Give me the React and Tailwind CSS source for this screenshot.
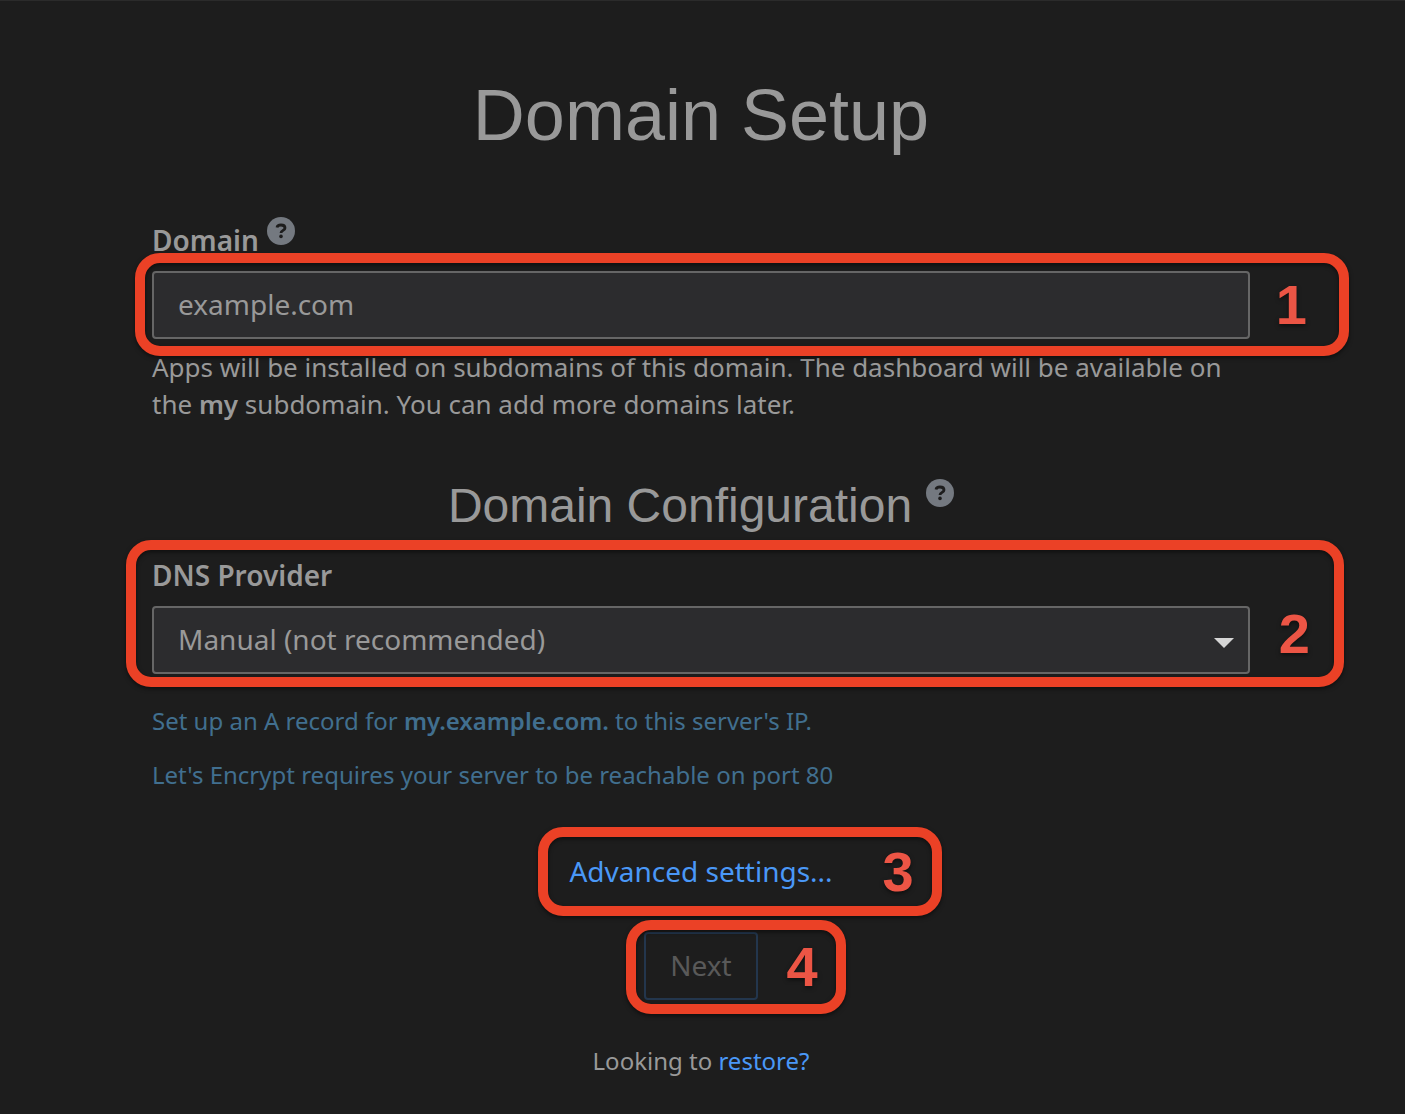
import React from "react";

function HelpIcon({ label }) {
  return (
    <svg viewBox="0 0 28 28" role="img" aria-label={label} className="size-7 shrink-0">
      <circle cx="14" cy="14" r="14" fill="#747980" />
      <path
        d="M10 10.6C10.3 8.8 11.8 8 14 8C16.6 8 18 9.1 18 11C18 13.5 14 13.2 14 16"
        fill="none"
        stroke="#1d1d1d"
        strokeWidth="2.8"
      />
      <circle cx="14" cy="19.4" r="1.8" fill="#1d1d1d" />
    </svg>
  );
}

function Callout({ number, className }) {
  return (
    <div
      className={
        "pointer-events-none absolute flex items-center justify-end rounded-[25px] border-[10px] border-[#eb4126] font-['Liberation_Sans',sans-serif] text-[56px] leading-none font-bold text-[#ec5545] drop-shadow-[0_2px_2px_rgba(0,0,0,0.5)] " +
        className
      }
    >
      <span>{number}</span>
    </div>
  );
}

const field =
  "block h-[68px] w-full appearance-none rounded border-2 border-[#666666] bg-[#2c2c2e] px-6 pb-0.5 text-[28px] text-[#999999] placeholder:text-[#999999] outline-none";

export default function App() {
  return (
    <div className="min-h-screen overflow-x-hidden border-t border-[#2b2b2b] bg-[#1d1d1d] pt-[74px] pr-[35px] pb-8 pl-8 font-['Noto_Sans',sans-serif] text-[#999999]">
      <main className="mx-auto w-full max-w-[1098px]">
        <h1 className="text-center font-['Liberation_Sans',sans-serif] text-[72px] leading-[80px]">
          Domain Setup
        </h1>

        <form className="mt-[66px]" onSubmit={(e) => e.preventDefault()}>
          <div className="flex gap-2 text-[28px] leading-[38px] font-semibold">
            <label htmlFor="domain">Domain</label>
            <span className="-mt-1">
              <HelpIcon label="Domain help" />
            </span>
          </div>
          <div className="relative mt-3">
            <input id="domain" type="text" placeholder="example.com" className={field} />
            <Callout number="1" className="-top-[18px] -right-[99px] -bottom-[17px] -left-[17px] pr-8" />
          </div>
          <p className="mt-[10px] text-[26px] leading-[37px]">
            Apps will be installed on subdomains of this domain. The dashboard will be available on
            the <b className="font-semibold">my</b> subdomain. You can add more domains later.
          </p>

          <h2 className="mt-14 flex justify-center gap-[14px] font-['Liberation_Sans',sans-serif] text-[48px] leading-[54px]">
            Domain Configuration
            <HelpIcon label="Domain configuration help" />
          </h2>

          <div className="relative mt-[23px]">
            <label htmlFor="provider" className="block text-[28px] leading-[38px] font-semibold">
              DNS Provider
            </label>
            <div className="relative mt-3">
              <select id="provider" className={field}>
                <option>Manual (not recommended)</option>
              </select>
              <svg
                viewBox="0 0 20 10"
                aria-hidden="true"
                className="pointer-events-none absolute top-8 right-4 h-[10px] w-5 fill-[#d6d6d6]"
              >
                <path d="M0 0h20L10 10z" />
              </svg>
            </div>
            <Callout number="2" className="-top-4 -right-[94px] -bottom-[13px] -left-[26px] pt-10 pr-6" />
          </div>

          <div className="mt-7 flex flex-col gap-[17px] text-[24px] leading-[37px] text-[#416f8f]">
            <p>
              Set up an A record for <b className="font-semibold">my.example.com.</b> to this server's
              IP.
            </p>
            <p>Let's Encrypt requires your server to be reachable on port 80</p>
          </div>

          <div className="mt-[59px] flex flex-col items-center gap-[42px]">
            <div className="relative">
              <a href="#advanced" className="block text-[28px] leading-[38px] text-[#4a98f7]">
                Advanced settings...
              </a>
              <Callout number="3" className="-top-[25px] -right-[109px] -bottom-[26px] -left-[31px] pr-[18px]" />
            </div>
            <div className="relative">
              <button
                type="submit"
                disabled
                className="h-[68px] rounded border-2 border-[#23364d] px-6 pb-0.5 text-[28px] text-[#595959]"
              >
                Next
              </button>
              <Callout number="4" className="-top-3 -right-[88px] -bottom-[14px] -left-[18px] pr-[18px]" />
            </div>
            <p className="text-[24px] leading-[37px]">
              Looking to{" "}
              <a href="#restore" className="text-[#4a98f7]">
                restore?
              </a>
            </p>
          </div>
        </form>
      </main>
    </div>
  );
}
